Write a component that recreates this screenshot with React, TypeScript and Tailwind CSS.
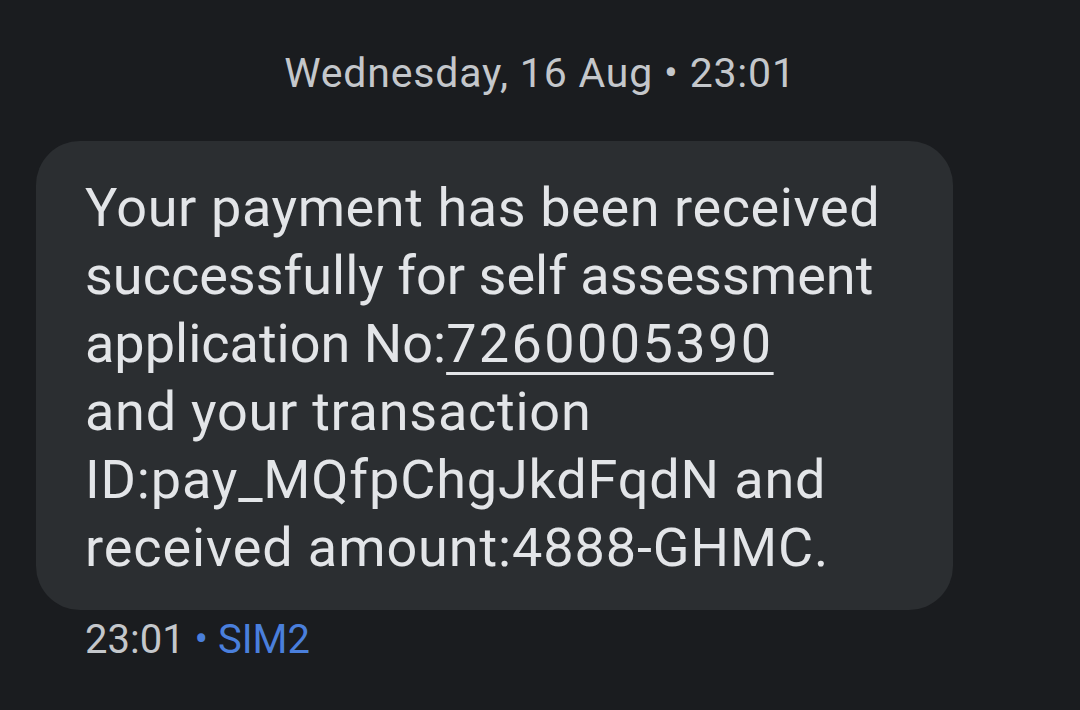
export default function App() {
  return (
    <div className="w-[1080px] h-[710px] bg-[#1a1c1f] overflow-hidden font-['Roboto',sans-serif]">
      {/* Date header */}
      <div className="pt-[47px] text-center text-[41px] leading-[52px] tracking-[0.8px] text-[#c4c7cb]">
        Wednesday, 16 Aug • 23:01
      </div>

      {/* Message bubble */}
      <div className="mt-[42px] ml-[36px] w-[917px] h-[469px] rounded-[44px] bg-[#2b2e31] pl-[49px] pt-[33px] text-[54px] leading-[68px] text-[#e3e5e8]">
        <div className="tracking-[0.6px]">Your payment has been received</div>
        <div>successfully for self assessment</div>
        <div>
          application No:
          <span className="underline decoration-[3px] underline-offset-[10px] tracking-[2.4px]">7260005390</span>
        </div>
        <div className="tracking-[0.75px]">and your transaction</div>
        <div className="tracking-[0.85px]">ID:pay_MQfpChgJkdFqdN and</div>
        <div className="tracking-[0.9px]">received amount:4888-GHMC.</div>
      </div>

      {/* Footer */}
      <div className="mt-[5px] ml-[85px] text-[40px] leading-[50px] text-[#c4c7cb]">
        23:01 <span className="text-[#4a7fdc]">• SIM2</span>
      </div>
    </div>
  );
}
